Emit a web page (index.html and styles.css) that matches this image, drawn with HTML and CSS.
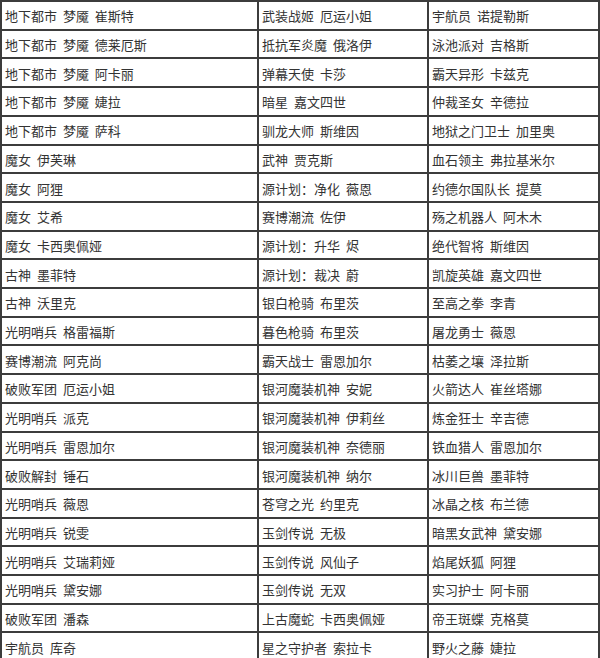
FILE: index.html
```html
<!DOCTYPE html>
<html lang="zh-CN">
<head>
<meta charset="utf-8">
<title>皮肤列表</title>
<link rel="stylesheet" href="styles.css">
</head>
<body>
<div class="table">
<div class="cell">地下都市 梦魇 崔斯特</div><div class="cell">武装战姬 厄运小姐</div><div class="cell">宇航员 诺提勒斯</div>
<div class="cell">地下都市 梦魇 德莱厄斯</div><div class="cell">抵抗军炎魔 俄洛伊</div><div class="cell">泳池派对 吉格斯</div>
<div class="cell">地下都市 梦魇 阿卡丽</div><div class="cell">弹幕天使 卡莎</div><div class="cell">霸天异形 卡兹克</div>
<div class="cell">地下都市 梦魇 婕拉</div><div class="cell">暗星 嘉文四世</div><div class="cell">仲裁圣女 辛德拉</div>
<div class="cell">地下都市 梦魇 萨科</div><div class="cell">驯龙大师 斯维因</div><div class="cell">地狱之门卫士 加里奥</div>
<div class="cell">魔女 伊芙琳</div><div class="cell">武神 贾克斯</div><div class="cell">血石领主 弗拉基米尔</div>
<div class="cell">魔女 阿狸</div><div class="cell">源计划：净化 薇恩</div><div class="cell">约德尔国队长 提莫</div>
<div class="cell">魔女 艾希</div><div class="cell">赛博潮流 佐伊</div><div class="cell">殇之机器人 阿木木</div>
<div class="cell">魔女 卡西奥佩娅</div><div class="cell">源计划：升华 烬</div><div class="cell">绝代智将 斯维因</div>
<div class="cell">古神 墨菲特</div><div class="cell">源计划：裁决 蔚</div><div class="cell">凯旋英雄 嘉文四世</div>
<div class="cell">古神 沃里克</div><div class="cell">银白枪骑 布里茨</div><div class="cell">至高之拳 李青</div>
<div class="cell">光明哨兵 格雷福斯</div><div class="cell">暮色枪骑 布里茨</div><div class="cell">屠龙勇士 薇恩</div>
<div class="cell">赛博潮流 阿克尚</div><div class="cell">霸天战士 雷恩加尔</div><div class="cell">枯萎之壤 泽拉斯</div>
<div class="cell">破败军团 厄运小姐</div><div class="cell">银河魔装机神 安妮</div><div class="cell">火箭达人 崔丝塔娜</div>
<div class="cell">光明哨兵 派克</div><div class="cell">银河魔装机神 伊莉丝</div><div class="cell">炼金狂士 辛吉德</div>
<div class="cell">光明哨兵 雷恩加尔</div><div class="cell">银河魔装机神 奈德丽</div><div class="cell">铁血猎人 雷恩加尔</div>
<div class="cell">破败解封 锤石</div><div class="cell">银河魔装机神 纳尔</div><div class="cell">冰川巨兽 墨菲特</div>
<div class="cell">光明哨兵 薇恩</div><div class="cell">苍穹之光 约里克</div><div class="cell">冰晶之核 布兰德</div>
<div class="cell">光明哨兵 锐雯</div><div class="cell">玉剑传说 无极</div><div class="cell">暗黑女武神 黛安娜</div>
<div class="cell">光明哨兵 艾瑞莉娅</div><div class="cell">玉剑传说 风仙子</div><div class="cell">焰尾妖狐 阿狸</div>
<div class="cell">光明哨兵 黛安娜</div><div class="cell">玉剑传说 无双</div><div class="cell">实习护士 阿卡丽</div>
<div class="cell">破败军团 潘森</div><div class="cell">上古魔蛇 卡西奥佩娅</div><div class="cell">帝王斑蝶 克格莫</div>
<div class="cell">宇航员 库奇</div><div class="cell">星之守护者 索拉卡</div><div class="cell">野火之藤 婕拉</div>
</div>
</body>
</html>
```

FILE: styles.css
```css
html, body {
  margin: 0;
  padding: 0;
  background: #ffffff;
  overflow: hidden;
}

.table {
  width: 600px;
  box-sizing: border-box;
  display: grid;
  grid-template-columns: 255px 168px 1fr;
  grid-auto-rows: 26.71px;
  gap: 2px;
  padding: 2px;
  background: #3c3c3c;
}

.cell {
  background: #ffffff;
  display: flex;
  align-items: center;
  padding: 1px 0 0 3px;
  box-sizing: border-box;
  font-family: "Noto Sans CJK SC", "Noto Sans", sans-serif;
  font-size: 13px;
  color: #333333;
  white-space: nowrap;
  word-spacing: 3px;
}
```
